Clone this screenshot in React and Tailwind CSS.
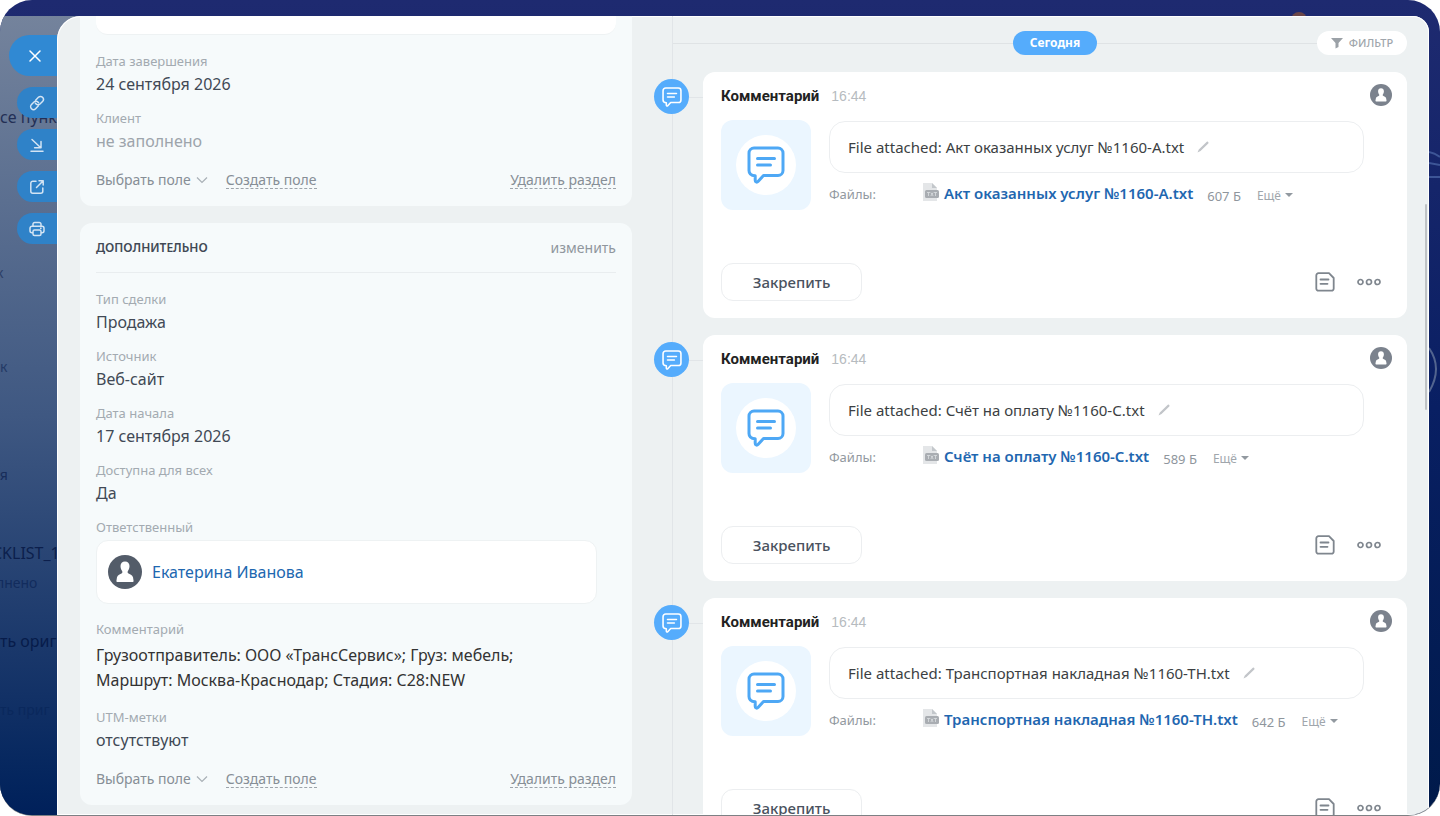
import React from "react";

const comments = [
  { id: 1, time: "16:44", file: "Акт оказанных услуг №1160-А.txt", size: "607 Б" },
  { id: 2, time: "16:44", file: "Счёт на оплату №1160-С.txt", size: "589 Б" },
  { id: 3, time: "16:44", file: "Транспортная накладная №1160-ТН.txt", size: "642 Б" },
];

const extraFields = [
  { label: "Тип сделки", value: "Продажа" },
  { label: "Источник", value: "Веб-сайт" },
  { label: "Дата начала", value: "17 сентября 2026" },
  { label: "Доступна для всех", value: "Да" },
];

function LinkIcon() {
  return (
    <svg viewBox="0 0 16 16" className="w-4 h-4" fill="none" stroke="currentColor" strokeWidth="1.5" strokeLinecap="round">
      <g transform="rotate(-45 8 8)">
        <path d="M7 11H3a2.900 2.900 0 0 1 0-5.800h3.600a2.900 2.900 0 0 1 2.700 3.800" />
        <path d="M9 5h4a2.900 2.900 0 0 1 0 5.800H9.400a2.900 2.900 0 0 1-2.700-3.800" />
      </g>
    </svg>
  );
}

function MinimizeIcon() {
  return (
    <svg viewBox="0 0 16 16" className="w-4 h-4" fill="none" stroke="currentColor" strokeWidth="1.5" strokeLinecap="round" strokeLinejoin="round">
      <path d="M3 2.500l8.500 8M12 4.500v6.300H5.600M2 14.200h12" />
    </svg>
  );
}

function OpenIcon() {
  return (
    <svg viewBox="0 0 16 16" className="w-4 h-4" fill="none" stroke="currentColor" strokeWidth="1.5" strokeLinecap="round" strokeLinejoin="round">
      <path d="M7 2.200H3.800A2 2 0 0 0 1.800 4.200v8a2 2 0 0 0 2 2h8a2 2 0 0 0 2-2V9" />
      <path d="M10 1.800h4.200V6M14 2L7.500 8.500" />
    </svg>
  );
}

function PrintIcon() {
  return (
    <svg viewBox="0 0 16 16" className="w-4 h-4" fill="none" stroke="currentColor" strokeWidth="1.500" strokeLinejoin="round">
      <path d="M4 5V3.200A1.700 1.700 0 0 1 5.700 1.500h4.600A1.700 1.700 0 0 1 12 3.200V5" />
      <path d="M4 11.800H3a2 2 0 0 1-2-2V7.200a2 2 0 0 1 2-2h10a2 2 0 0 1 2 2v2.600a2 2 0 0 1-2 2h-1" />
      <rect x="4" y="9" width="8" height="5.500" rx="1.500" />
      <path d="M11 7.300h1.600" />
    </svg>
  );
}

function CommentIcon({ className }) {
  return (
    <svg viewBox="0 0 38 38" className={className} fill="none" stroke="currentColor" strokeLinecap="round" strokeLinejoin="round" strokeWidth="3">
      <path d="M7 2h24a5 5 0 0 1 5 5v17.500a5 5 0 0 1-5 5H16.500l-5.500 6c-1.200 1.200-2.800.5-2.800-1.200v-4.500C4 29.500 2 27.500 2 24.500V7a5 5 0 0 1 5-5z" />
      <path d="M10.500 12.500h17M10.500 19h13" />
    </svg>
  );
}

function UserIcon({ className }) {
  return (
    <svg viewBox="0 0 34 34" className={className} aria-hidden="true">
      <circle cx="17" cy="17" r="17" fill="currentColor" />
      <path
        fill="#fff"
        d="M17 6.500c2.800 0 4.500 1.800 4.500 4.600 0 2-.8 4-1.700 5.100-.3.500-.3 1.600.3 2 1.800.9 4.200 1.500 4.900 4.100l.6 3.600c0 .8-.5 1.100-1.200 1.100H9.600c-.7 0-1.200-.3-1.200-1.100l.6-3.600c.7-2.600 3.100-3.200 4.900-4.100.6-.4.6-1.500.3-2-.9-1.100-1.700-3.100-1.700-5.100 0-2.800 1.700-4.600 4.500-4.600z"
      />
    </svg>
  );
}

function TxtIcon() {
  return (
    <svg viewBox="0 0 16 18" className="w-4 h-[18px] shrink-0" aria-hidden="true">
      <path d="M0 0h9l5 5v13H0z" fill="#e4e6e8" />
      <path d="M9 0l5 5H9z" fill="#c3c7cb" />
      <rect x="2" y="7" width="14" height="8" rx="1.500" fill="#a9adb2" />
      <path d="M4 9.500h3M5.500 9.500V13M7.800 9.500l2.400 3.500M10.200 9.500L7.800 13M11 9.500h3M12.500 9.500V13" stroke="#dcdfe2" strokeWidth=".8" />
    </svg>
  );
}

function PencilIcon() {
  return (
    <svg viewBox="0 0 12 12" className="w-3 h-3" aria-hidden="true">
      <path d="M9.800.8a.9.900 0 0 1 1.200 0l.3.400a.9.900 0 0 1 0 1.200L3.500 10 .5 11.500 1.800 8.500z" fill="#c2c5c9" />
    </svg>
  );
}

function NoteIcon() {
  return (
    <svg viewBox="0 0 20 20" className="w-5 h-5" fill="none" stroke="currentColor" strokeWidth="1.800" strokeLinecap="round" strokeLinejoin="round">
      <path d="M3.500 1.200h10.500L18.700 6v10.500a2.200 2.200 0 0 1-2.200 2.200h-13a2.200 2.200 0 0 1-2.200-2.200V3.400a2.200 2.200 0 0 1 2.200-2.200z" />
      <path d="M5.500 7.500h8M5.500 11.800h7" />
    </svg>
  );
}

function DotsIcon() {
  return (
    <svg viewBox="0 0 24 8" className="w-6 h-2" fill="none" stroke="currentColor" strokeWidth="1.700">
      <circle cx="3.500" cy="4" r="2.500" />
      <circle cx="12" cy="4" r="2.500" />
      <circle cx="20.500" cy="4" r="2.500" />
    </svg>
  );
}

function RailButton({ label, children }) {
  return (
    <button aria-label={label} className="w-10 h-[31px] pl-3 rounded-l-full bg-[#2f82c8] text-[#d3e4f4] flex items-center">
      {children}
    </button>
  );
}

function SideRail() {
  return (
    <aside className="relative w-[82px] pr-[25px] shrink-0 overflow-hidden bg-linear-to-b from-[#74839c] via-[#3f5882] to-[#00205a]">
      {/* page under the slider, only its right edge shows */}
      <div className="absolute inset-0 whitespace-nowrap" aria-hidden="true">
        <p className="absolute top-[89px] text-base text-[#232f55]">се пунк</p>
        <p className="absolute top-[247px] -left-1 text-sm text-[#2d4068]">к</p>
        <p className="absolute top-[341px] text-sm text-[#243a66]">к</p>
        <p className="absolute top-[449px] -left-2 text-sm text-[#182d5a]">ая</p>
        <p className="absolute top-[525px] -left-2 text-base text-[#0c1f4c]">CKLIST_1</p>
        <p className="absolute top-[557px] -left-1 text-sm text-[#122c5d]">лнено</p>
        <p className="absolute top-[613px] text-base text-[#071c4a]">ть ориг</p>
        <p className="absolute top-[684px] text-sm text-[#0a285c]">ть приг</p>
      </div>
      <nav className="relative pt-[19px] flex flex-col items-end gap-[11px]">
        <button aria-label="Закрыть" className="w-12 h-[41px] pl-5 rounded-l-full bg-[#3089d3] text-white flex items-center">
          <svg viewBox="0 0 12 12" className="w-3 h-3" stroke="currentColor" strokeWidth="1.500" strokeLinecap="round">
            <path d="M1 1l10 10M11 1L1 11" />
          </svg>
        </button>
        <RailButton label="Скопировать ссылку"><LinkIcon /></RailButton>
        <RailButton label="Свернуть"><MinimizeIcon /></RailButton>
        <RailButton label="Открыть в новом окне"><OpenIcon /></RailButton>
        <RailButton label="Печать"><PrintIcon /></RailButton>
      </nav>
    </aside>
  );
}

function Field({ label, value, empty }) {
  return (
    <div>
      <dt className="text-[13px] leading-5 text-[#a3aab1]">{label}</dt>
      <dd className={empty ? "text-base leading-[26px] text-[#9da4ab]" : "text-base leading-[26px] text-[#414955]"}>{value}</dd>
    </div>
  );
}

function SectionFooter() {
  return (
    <div className="mt-4 flex items-center text-sm leading-5 text-[#868e96]">
      <button className="flex items-center gap-[5px]">
        Выбрать поле
        <svg viewBox="0 0 12 8" className="w-3 h-2" fill="none" stroke="#a9b0b6" strokeWidth="1.200">
          <path d="M1 1.500l5 5 5-5" />
        </svg>
      </button>
      <a href="#" className="ml-[18px] h-[18px] leading-[18px] border-b border-dashed border-[#9da4ab]">Создать поле</a>
      <a href="#" className="ml-auto h-[18px] leading-[18px] border-b border-dashed border-[#9da4ab]">Удалить раздел</a>
    </div>
  );
}

function DealDetails() {
  return (
    <div className="flex flex-col gap-[17px]">
      <section className="px-4 pb-4 bg-[#f6fafb] rounded-b-xl">
        <div className="h-[19px] bg-white rounded-b-xl border-b border-[#eef2f3]" />
        <dl className="pt-4 flex flex-col gap-[11px]">
          <Field label="Дата завершения" value="24 сентября 2026" />
          <Field label="Клиент" value="не заполнено" empty />
        </dl>
        <SectionFooter />
      </section>

      <section className="px-4 pt-[15px] pb-4 bg-[#f6fafb] rounded-xl">
        <header className="pb-[14px] flex items-center justify-between border-b border-[#e9edef]">
          <h2 className="text-xs leading-5 font-semibold text-[#414955]">ДОПОЛНИТЕЛЬНО</h2>
          <button className="text-sm leading-5 text-[#90979e]">изменить</button>
        </header>
        <dl className="pt-4 flex flex-col gap-[11px]">
          {extraFields.map((f) => (
            <Field key={f.label} label={f.label} value={f.value} />
          ))}
          <div>
            <dt className="text-[13px] leading-5 text-[#a3aab1]">Ответственный</dt>
            <dd className="mt-[3px] mr-[19px] h-16 px-[11px] flex items-center gap-[10px] bg-white rounded-xl border border-[#eef2f3]">
              <UserIcon className="w-[34px] h-[34px] text-[#535c69]" />
              <a href="#" className="text-base text-[#2067b0]">Екатерина Иванова</a>
            </dd>
          </div>
          <div className="pt-1">
            <dt className="text-[13px] leading-5 text-[#a3aab1]">Комментарий</dt>
            <dd className="mt-1 text-base leading-[25px] text-[#333]">
              Грузоотправитель: ООО «ТрансСервис»; Груз: мебель;
              <br />
              Маршрут: Москва-Краснодар; Стадия: C28:NEW
            </dd>
          </div>
          <div className="pt-[3px]">
            <Field label="UTM-метки" value="отсутствуют" />
          </div>
        </dl>
        <SectionFooter />
      </section>
    </div>
  );
}

function CommentCard({ comment }) {
  return (
    <li className="flex items-start">
      <div className="mt-[7px] w-[35px] h-[35px] shrink-0 rounded-full bg-[#55acfc] text-white flex items-center justify-center">
        <CommentIcon className="w-5 h-5" />
      </div>
      <div className="mt-[25px] w-[14px] h-px shrink-0 bg-[#e1e5e8]" />
      <article className="flex-1 min-w-0 pl-[18px] pr-[15px] pt-3 pb-[17px] bg-white rounded-xl">
        <header className="h-[22px] flex items-end gap-3">
          <h3 className="font-['Roboto',sans-serif] text-[15px] leading-5 font-bold text-[#222]">Комментарий</h3>
          <time className="font-['Liberation_Sans',sans-serif] text-sm leading-5 text-[#b6bbc0]">{comment.time}</time>
          <a href="#" aria-label="Екатерина Иванова" className="ml-auto">
            <UserIcon className="w-[22px] h-[22px] text-[#7b828d]" />
          </a>
        </header>

        <div className="mt-[14px] flex gap-[18px]">
          <div className="w-[90px] h-[90px] shrink-0 rounded-xl bg-[#ebf6ff] flex items-center justify-center">
            <div className="w-[60px] h-[60px] rounded-full bg-white text-[#4ea8f5] flex items-center justify-center">
              <CommentIcon className="w-[38px] h-[38px]" />
            </div>
          </div>
          <div className="flex-1 min-w-0 mr-7 pt-px">
            <div className="h-[52px] px-[18px] flex items-center gap-[13px] rounded-2xl border border-[#eceef0]">
              <p className="text-[15px] text-[#3c3f43]">File attached: {comment.file}</p>
              <button aria-label="Изменить"><PencilIcon /></button>
            </div>
            <div className="mt-[10px] flex items-start leading-5">
              <span className="w-[94px] pt-px text-[13px] leading-5 text-[#9299a0]">Файлы:</span>
              <TxtIcon />
              <a href="#" className="ml-[5px] text-[15px] leading-5 font-semibold text-[#1f67b0]">{comment.file}</a>
              <span className="ml-[14px] pt-[3px] text-[13px] leading-5 text-[#8f969d]">{comment.size}</span>
              <button className="ml-4 pt-[3px] flex items-center gap-1 text-xs leading-5 text-[#a0a6ac]">
                Ещё
                <svg viewBox="0 0 8 8" className="w-2 h-2" fill="#9299a0">
                  <path d="M0 1h8L4 5z" />
                </svg>
              </button>
            </div>
          </div>
        </div>

        <footer className="mt-[53px] h-[38px] flex items-center text-[#7f868e]">
          <button className="w-[141px] h-full rounded-xl border border-[#eceef0] text-[15px] font-medium text-[#4a525e]">Закрепить</button>
          <button aria-label="Заметка" className="ml-auto"><NoteIcon /></button>
          <button aria-label="Ещё" className="ml-[22px] mr-[11px]"><DotsIcon /></button>
        </footer>
      </article>
    </li>
  );
}

function Timeline() {
  return (
    <div className="relative">
      {/* vertical thread behind the round markers */}
      <div className="absolute inset-y-0 left-[18px] w-px bg-[#e1e5e8]" />
      <div className="relative pt-[15px] pl-[49px] grid grid-cols-[1fr_auto_1fr] items-center">
        <div className="-ml-[30px] h-px bg-[#dfe3e5]" />
        <span className="h-6 px-[17px] flex items-center rounded-full bg-[#55acfc] text-xs font-bold text-white">Сегодня</span>
        <div className="flex items-center">
          <div className="flex-1 h-px bg-[#dfe3e5]" />
          <button className="w-[90px] h-6 flex items-center justify-center gap-[6px] rounded-full bg-white text-[11px] font-medium text-[#a0a6ac]">
            <svg viewBox="0 0 12 12" className="w-3 h-3" fill="#9ba1a7">
              <path d="M0 1h12L7.500 6v4l-3 1.500V6z" />
            </svg>
            ФИЛЬТР
          </button>
        </div>
      </div>
      <ul className="relative mt-[17px] flex flex-col gap-[17px]">
        {comments.map((c) => (
          <CommentCard key={c.id} comment={c} />
        ))}
      </ul>
    </div>
  );
}

export default function App() {
  return (
    <div className="h-screen bg-white font-['Noto_Sans','Open_Sans',sans-serif]">
      <div className="relative h-full pt-4 flex overflow-hidden rounded-[32px] border-b border-[#7d8084] bg-linear-to-b from-[#1e2a70] via-[#091f63] to-[#001a4a]">
        {/* bits of the wallpaper left visible around the slider */}
        <div className="absolute top-3 right-[133px] w-4 h-4 rounded-full bg-[#6b4648]" />
        <svg viewBox="0 0 11 40" className="absolute right-0 top-[145px] w-[11px] h-10" fill="none" stroke="#3d5596" strokeWidth="2">
          <path d="M0 7q6 1 11 5M0 18l11 2M0 32h11" />
        </svg>
        <svg viewBox="0 0 11 50" className="absolute right-0 top-[345px] w-[11px] h-[50px]" fill="none" stroke="#52648f" strokeWidth="2">
          <path d="M0 3q14 20 0 44" />
        </svg>
        <SideRail />
        <main className="relative -ml-[25px] flex-1 min-w-0 overflow-hidden rounded-tl-3xl rounded-tr-2xl bg-[#edf1f2] inset-shadow-[0_0_0_1px_#fff]">
          <div className="pl-[23px] pr-[22px] grid grid-cols-[552fr_753fr] gap-[22px] items-start">
            <DealDetails />
            <Timeline />
          </div>
          <div className="absolute right-[2px] top-[188px] w-[2px] h-[206px] rounded-full bg-[#bfc3c6]" />
        </main>
        <div className="w-[11px] shrink-0" />
      </div>
    </div>
  );
}
